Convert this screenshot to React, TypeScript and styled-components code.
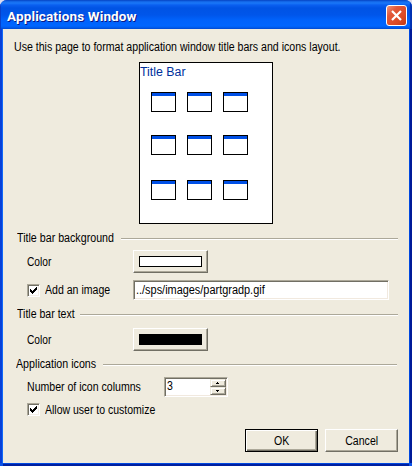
import React, { useState } from 'react';
import styled, { createGlobalStyle } from 'styled-components';

const face = '#efebde';
const shadow = '#aca899';
const dark = '#716f64';

const GlobalStyle = createGlobalStyle`
  *, *::before, *::after { box-sizing: border-box; }
  body { margin: 0; background: #dcdcf0; }
  button, input { font: inherit; color: inherit; margin: 0; padding: 0; }
`;

const Window = styled.div`
  width: 412px;
  height: 466px;
  display: flex;
  flex-direction: column;
  overflow: hidden;
  border-radius: 7px 7px 0 0;
  background: #0a52e8;
  font: 12px/14px "Liberation Sans", Arial, sans-serif;
  color: #000;
`;

const TitleBar = styled.div`
  flex: none;
  height: 29px;
  display: flex;
  justify-content: space-between;
  padding: 5px 5px 0 7px;
  background: linear-gradient(#0847c4 0, #0f5fe0 1px, #1a78f8 3px, #0a5ff0 5px, #0053e4 8px, #0056ea 15px, #0062fb 20px, #0066ff 26px, #0050d8 29px);
  box-shadow: inset -2px 0 1px #0030b0, inset 1px 0 0 #0840c8;
`;

const Caption = styled.h1`
  margin: 3px 0 0;
  height: 16px;
  font: 700 13.5px/16px Roboto, "Liberation Sans", sans-serif;
  letter-spacing: 0.13px;
  color: #fff;
  text-shadow: 1px 1px 0 #0a1883;
  white-space: nowrap;
`;

const CloseButton = styled.button`
  width: 21px;
  height: 21px;
  display: grid;
  place-items: center;
  border: 1px solid #fff;
  border-radius: 3px;
  background: linear-gradient(135deg, #f0957a 0%, #e2583a 30%, #dc4a24 70%, #c03a14 100%);
`;

const Body = styled.div`
  flex: 1;
  display: flex;
  flex-direction: column;
  margin: 0 3px 3px;
  background: ${face};
  box-shadow: 0 1px 0 #0048e0, 0 3px 0 #0020a0, -1px 0 0 #1068f8, -3px 0 0 #0840d8, 1px 0 0 #0048e0, 3px 0 0 #001a98;
`;

const Text = styled.span<{ $scale?: number }>`
  display: block;
  flex: none;
  height: 14px;
  white-space: nowrap;
  transform: scaleX(${p => p.$scale ?? 0.88});
  transform-origin: 0 0;
`;

const Intro = styled.div`
  height: 33px;
  padding: 11px 0 0 11px;
`;

const Preview = styled.div`
  width: 134px;
  height: 162px;
  margin-left: 136px;
  border: 1px solid #000;
  background: #fff;
`;

const PreviewTitle = styled.div`
  height: 29px;
  padding-top: 2px;
  color: #00309c;
`;

const IconGrid = styled.div`
  display: grid;
  grid-template-columns: repeat(3, 25px);
  grid-template-rows: 20px 20px 20px;
  column-gap: 11px;
  row-gap: 24px;
  padding-left: 11px;
`;

const MiniWindow = styled.div<{ $drop: number }>`
  height: 20px;
  margin-top: ${p => p.$drop}px;
  border: 1px solid #000;
  background: linear-gradient(#0050e6 3px, #fff 3px);
`;

const SectionHead = styled.div<{ $top: number; $label: number; $shift?: number }>`
  flex: none;
  display: grid;
  grid-template-columns: ${p => p.$label}px 1fr;
  height: 14px;
  margin: ${p => p.$top}px ${p => 11 + (p.$shift ?? 0)}px 0 ${p => 14 - (p.$shift ?? 0)}px;

  &::after {
    content: '';
    height: 2px;
    margin-top: 7px;
    border-top: 1px solid ${shadow};
    border-bottom: 1px solid #fff;
  }
`;

const Field = styled.div<{ $top: number; $height: number; $label: number }>`
  flex: none;
  display: grid;
  grid-template-columns: ${p => p.$label}px auto;
  justify-content: start;
  align-items: center;
  height: ${p => p.$height}px;
  margin-top: ${p => p.$top}px;
  padding-left: 24px;
`;

const ColorButton = styled.button`
  width: 75px;
  height: 23px;
  display: grid;
  place-items: center;
  border: 1px solid;
  border-color: #fff ${dark} ${dark} #fff;
  background: ${face};
  box-shadow: inset -1px -1px 0 ${shadow};
`;

const Swatch = styled.span<{ $color: string }>`
  width: 63px;
  height: 11px;
  border: 1px solid #000;
  background: ${p => p.$color};
`;

const CheckLabel = styled.label`
  display: flex;
  align-items: center;
  gap: 5px;
`;

const Box = styled.span`
  flex: none;
  width: 13px;
  height: 13px;
  display: grid;
  place-items: center;
  border: 1px solid;
  border-color: ${shadow} #fff #fff ${shadow};
  background: #fff;
  box-shadow: inset 1px 1px 0 ${dark}, inset -1px -1px 0 #f4efe6;
`;

const Sunken = styled.div<{ $width: number }>`
  display: flex;
  width: ${p => p.$width}px;
  height: 20px;
  border: 1px solid;
  border-color: ${shadow} #fff #fff ${shadow};
  background: #fff;
  box-shadow: inset 1px 1px 0 ${dark}, inset -1px -1px 0 #f1e9df;
`;

const Value = styled.div<{ $top: number; $left: number }>`
  flex: 1;
  min-width: 0;
  padding: ${p => p.$top}px 0 0 ${p => p.$left}px;
`;

const Spinner = styled.div`
  display: grid;
  grid-template-rows: 8px 8px;
  width: 16px;
  margin: 1px 1px 0 0;
`;

const SpinButton = styled.button`
  display: grid;
  place-items: center;
  border: 1px solid;
  border-color: ${face} ${dark} ${dark} ${face};
  background: ${face};
  box-shadow: inset 1px 1px 0 #fff, inset -1px -1px 0 ${shadow};
`;

const Footer = styled.div`
  display: flex;
  gap: 7px;
  margin: auto 11px 11px auto;
`;

const PushButton = styled.button<{ $default?: boolean }>`
  width: 73px;
  height: 23px;
  display: flex;
  justify-content: center;
  align-items: center;
  border: 1px solid;
  border-color: ${p => (p.$default ? '#000' : `#fff ${dark} ${dark} #fff`)};
  background: ${face};
  box-shadow: ${p =>
    p.$default
      ? `inset 1px 1px 0 #fff, inset -1px -1px 0 ${dark}, inset -2px -2px 0 ${shadow}`
      : `inset -1px -1px 0 ${shadow}`};

  ${Text} { transform-origin: 50% 0; }
`;

const Check = () => (
  <svg width="7" height="7" viewBox="0 0 7 7" shapeRendering="crispEdges">
    <path d="M0 2h1v1h1v1h1v-1h1v-1h1v-1h1v-1h1v3h-1v1h-1v1h-1v1h-1v1h-1v-1h-1v-1h-1z" />
  </svg>
);

const Arrow = ({ down = false }: { down?: boolean }) => (
  <svg width="4" height="2" viewBox="0 0 4 2" shapeRendering="crispEdges">
    <path d={down ? 'M0 0h3v1h-1v1h-1v-1h-1z' : 'M1 0h1v1h1v1h-3v-1h1z'} />
  </svg>
);

function CheckField({ label, scale }: { label: string; scale?: number }) {
  const [on, setOn] = useState(true);
  return (
    <CheckLabel onClick={() => setOn(!on)}>
      <Box>{on && <Check />}</Box>
      <Text $scale={scale}>{label}</Text>
    </CheckLabel>
  );
}

export default function App() {
  const [columns, setColumns] = useState(3);
  return (
    <>
      <GlobalStyle />
      <Window>
        <TitleBar>
          <Caption>Applications Window</Caption>
          <CloseButton aria-label="Close">
            <svg width="11" height="11" viewBox="0 0 11 11">
              <path d="M1 1l9 9M10 1l-9 9" stroke="#fff" strokeWidth="2.2" />
            </svg>
          </CloseButton>
        </TitleBar>
        <Body>
          <Intro>
            <Text $scale={0.882}>Use this page to format application window title bars and icons layout.</Text>
          </Intro>
          <Preview>
            <PreviewTitle>
              <Text $scale={1.03}>Title Bar</Text>
            </PreviewTitle>
            <IconGrid>
              {Array.from({ length: 9 }, (_, i) => (
                <MiniWindow key={i} $drop={i >= 3 && i < 6 ? -1 : 0} />
              ))}
            </IconGrid>
          </Preview>
          <SectionHead $top={7} $label={104}>
            <Text $scale={0.89}>Title bar background</Text>
          </SectionHead>
          <Field $top={5} $height={23} $label={106}>
            <Text $scale={0.85}>Color</Text>
            <ColorButton aria-label="Background color"><Swatch $color="#fff" /></ColorButton>
          </Field>
          <Field $top={7} $height={20} $label={106}>
            <CheckField label="Add an image" scale={0.88} />
            <Sunken $width={256}>
              <Value $top={2} $left={2}><Text $scale={0.91}>../sps/images/partgradp.gif</Text></Value>
            </Sunken>
          </Field>
          <SectionHead $top={7} $label={63}>
            <Text $scale={0.88}>Title bar text</Text>
          </SectionHead>
          <Field $top={7} $height={23} $label={106}>
            <Text $scale={0.85}>Color</Text>
            <ColorButton aria-label="Text color"><Swatch $color="#000" /></ColorButton>
          </Field>
          <SectionHead $top={6} $label={87} $shift={1}>
            <Text $scale={0.89}>Application icons</Text>
          </SectionHead>
          <Field $top={6} $height={20} $label={137}>
            <Text>Number of icon columns</Text>
            <Sunken $width={64}>
              <Value $top={1} $left={2}><Text>{columns}</Text></Value>
              <Spinner>
                <SpinButton aria-label="More" onClick={() => setColumns(columns + 1)}><Arrow /></SpinButton>
                <SpinButton aria-label="Fewer" onClick={() => setColumns(Math.max(1, columns - 1))}><Arrow down /></SpinButton>
              </Spinner>
            </Sunken>
          </Field>
          <Field $top={5} $height={15} $label={160}>
            <CheckField label="Allow user to customize" scale={0.875} />
          </Field>
          <Footer>
            <PushButton $default><Text $scale={0.88}>OK</Text></PushButton>
            <PushButton><Text $scale={0.88}>Cancel</Text></PushButton>
          </Footer>
        </Body>
      </Window>
    </>
  );
}
